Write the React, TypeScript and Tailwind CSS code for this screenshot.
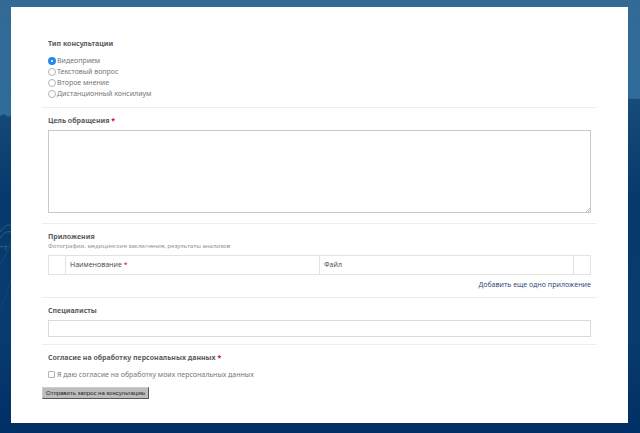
import type { ReactNode } from 'react';

const consultationTypes = ['Видеоприем', 'Текстовый вопрос', 'Второе мнение', 'Дистанционный консилиум'];

const headingClass = 'block text-[7px] leading-[10px] font-bold text-[#5c5c5c]';

function Required() {
  return <span className="text-[#e00000]"> *</span>;
}

function Section({ children }: { children: ReactNode }) {
  return <div className="border-b border-[#ededed] px-1.5 pt-2 pb-[7px]">{children}</div>;
}

function Backdrop() {
  return (
    <svg className="absolute inset-0 -z-10 h-full w-full" viewBox="0 0 640 433" preserveAspectRatio="none" aria-hidden="true">
      <defs>
        <linearGradient id="sky" x1="0" y1="0" x2="0" y2="1">
          <stop offset="0" stopColor="#336a95" />
          <stop offset="1" stopColor="#2d6c9c" />
        </linearGradient>
        <linearGradient id="hills" x1="0" y1="0" x2="0" y2="1">
          <stop offset="0" stopColor="#174b78" />
          <stop offset="0.3" stopColor="#063a6d" />
          <stop offset="0.7" stopColor="#083c6e" />
          <stop offset="1" stopColor="#002f66" />
        </linearGradient>
      </defs>
      <rect width="640" height="140" fill="url(#sky)" />
      <path d="M0 116L4 114L8 117L12 115L600 98L640 99V433H0Z" fill="url(#hills)" />
      <g fill="none" stroke="#49769d" strokeWidth="1" opacity="0.6">
        <path d="M0 232Q5 224 11 225" />
        <path d="M0 238Q5 230 11 232" />
        <path d="M0 247L7 246L5 250" />
        <path d="M0 265Q7 255 11 242" opacity="0.4" />
        <path d="M0 310Q5 300 11 280" opacity="0.3" />
      </g>
    </svg>
  );
}

export default function App() {
  return (
    <div className="relative isolate min-h-screen overflow-hidden bg-[#002f66] pt-[7px] pr-3 pb-2.5 pl-[11px] font-['Noto_Sans','Open_Sans',sans-serif]">
      <Backdrop />
      <form className="bg-white px-[31px] pt-6 pb-6" onSubmit={(e) => e.preventDefault()}>
        <Section>
          <fieldset>
            <legend className={headingClass}>Тип консультации</legend>
            <div className="mt-1.5 mb-px">
              {consultationTypes.map((type, i) => (
                <label key={type} className="flex h-[11px] items-center gap-px text-[7px] leading-[10px] text-[#777]">
                  <input
                    type="radio"
                    name="type"
                    defaultChecked={i === 0}
                    className="size-2 shrink-0 appearance-none rounded-full border border-[#b4b4b4] bg-white checked:border-[3px] checked:border-[#2486ee]"
                  />
                  {type}
                </label>
              ))}
            </div>
          </fieldset>
        </Section>
        <Section>
          <label htmlFor="purpose" className={headingClass}>
            Цель обращения
            <Required />
          </label>
          <div className="relative mt-1 mb-[3px]">
            <textarea
              id="purpose"
              className="block h-[83px] w-full resize-none border border-[#c8c8c8] p-1 text-[7px] outline-none"
            />
            <svg className="pointer-events-none absolute right-px bottom-px size-1" viewBox="0 0 4 4" aria-hidden="true">
              <path d="M0 4L4 0M2 4L4 2" stroke="#8a8a8a" strokeWidth="0.6" />
            </svg>
          </div>
        </Section>
        <Section>
          <h2 className={headingClass}>Приложения</h2>
          <p className="font-['Open_Sans','Noto_Sans',sans-serif] text-[6px] leading-[9px] text-[#888]">
            Фотографии, медицинские заключения, результаты анализов
          </p>
          <table className="mt-1 w-full table-fixed border-collapse text-left font-['Open_Sans','Noto_Sans',sans-serif] text-[7px] leading-[10px] text-[#444]">
            <colgroup>
              <col className="w-[17px]" />
              <col />
              <col />
              <col className="w-[17px]" />
            </colgroup>
            <thead>
              <tr className="h-[19px]">
                <td className="border border-[#e2e2e2]" />
                <th scope="col" className="border border-[#e2e2e2] px-1 font-normal">
                  Наименование
                  <Required />
                </th>
                <th scope="col" className="border border-[#e2e2e2] px-1 font-normal">Файл</th>
                <td className="border border-[#e2e2e2]" />
              </tr>
            </thead>
          </table>
          <div className="mt-[5px] flex justify-end">
            <a href="#add" className="font-['Open_Sans','Noto_Sans',sans-serif] text-[7px] leading-[10px] text-[#1d3d6f]">
              Добавить еще одно приложение
            </a>
          </div>
        </Section>
        <Section>
          <label htmlFor="specialists" className={headingClass}>Специалисты</label>
          <input
            id="specialists"
            type="text"
            className="mt-1 block h-[17px] w-full border border-[#dadada] px-1 text-[7px] outline-none"
          />
        </Section>
        <div className="px-1.5 pt-2 pb-[7px]">
          <h2 className={headingClass}>
            Согласие на обработку персональных данных
            <Required />
          </h2>
          <label className="mt-1.5 flex h-[11px] items-center gap-0.5 text-[7px] leading-[10px] text-[#777]">
            <input type="checkbox" className="size-[7px] shrink-0 appearance-none rounded-[1px] border border-[#b4b4b4] bg-white" />
            Я даю согласие на обработку моих персональных данных
          </label>
        </div>
        <button
          type="submit"
          className="block h-3 border border-t-[#ccc] border-r-[#555] border-b-[#555] border-l-[#ccc] bg-[#bdbdbd] px-[3px] font-['Liberation_Sans',sans-serif] text-[6px] leading-[9px] text-[#222]"
        >
          Отправить запрос на консультацию
        </button>
      </form>
    </div>
  );
}
